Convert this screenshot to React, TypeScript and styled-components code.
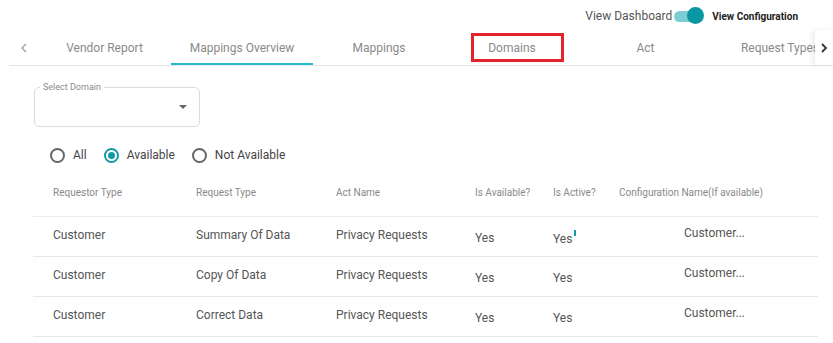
import React from 'react'
import styled, { createGlobalStyle, css } from 'styled-components'

const GlobalStyle = createGlobalStyle`
  html, body {
    margin: 0;
    padding: 0;
    background: #fff;
    font-family: Roboto, "Liberation Sans", Arial, sans-serif;
  }
  * { box-sizing: border-box; }
`

const Page = styled.div`
  width: 833px;
  height: 343px;
  overflow: hidden;
  background: #fff;
`

const TopBar = styled.div`
  height: 30px;
  display: flex;
  align-items: center;
  justify-content: flex-end;
  padding: 2px 35px 0 0;
`

const DashLabel = styled.span`
  font-size: 12px;
  color: #555;
`

const Toggle = styled.div`
  position: relative;
  width: 30px;
  height: 18px;
  margin-left: 2px;
  display: flex;
  align-items: center;
  &::before {
    content: '';
    width: 28px;
    height: 11px;
    border-radius: 6px;
    background: #7ccdd2;
  }
  &::after {
    content: '';
    position: absolute;
    right: 0;
    top: 0;
    width: 17px;
    height: 17px;
    border-radius: 50%;
    background: #0b97a2;
  }
`

const ConfigLabel = styled.span`
  margin-left: 8px;
  font-size: 10px;
  font-weight: 700;
  color: #222;
`

const TabBar = styled.div`
  display: flex;
  height: 36px;
  margin-left: 9px;
  border-bottom: 1px solid #e6e6e6;
`

const ScrollButton = styled.div<{ side: 'left' | 'right' }>`
  flex: none;
  display: flex;
  align-items: center;
  justify-content: center;
  background: #fff;
  ${p => p.side === 'left' ? css`
    width: 29px;
  ` : css`
    width: 18px;
    box-shadow: -3px 0 5px rgba(0, 0, 0, 0.07);
    z-index: 1;
  `}
`

const TabScroller = styled.div`
  flex: 1;
  display: flex;
  overflow: hidden;
`

const Tab = styled.div<{ active?: boolean }>`
  position: relative;
  flex: none;
  display: flex;
  align-items: center;
  justify-content: center;
  font-size: 12px;
  color: #8a8a8a;
  white-space: nowrap;
  padding-top: 1px;
  ${p => p.active && css`
    &::after {
      content: '';
      position: absolute;
      left: 0;
      right: 0;
      bottom: 0;
      height: 2px;
      background: #26b8cc;
    }
  `}
`

const Marked = styled.span`
  position: relative;
  &::after {
    content: '';
    position: absolute;
    left: -17px;
    right: -28px;
    top: -8px;
    bottom: -7px;
    border: 3px solid #e4232c;
  }
`

const Content = styled.div`
  padding: 21px 0 0 34px;
`

const SelectBox = styled.div`
  position: relative;
  width: 166px;
  height: 40px;
  border: 1px solid #dcdcdc;
  border-radius: 5px;
  display: flex;
  align-items: center;
  justify-content: flex-end;
  padding-right: 12px;
`

const SelectLabel = styled.span`
  position: absolute;
  left: 5px;
  top: -6px;
  padding: 0 3px;
  background: #fff;
  font-size: 9px;
  line-height: 11px;
  color: #8a8a8a;
`

const Caret = styled.span`
  width: 0;
  height: 0;
  border-left: 4px solid transparent;
  border-right: 4px solid transparent;
  border-top: 4px solid #666;
`

const RadioGroup = styled.div`
  display: flex;
  align-items: center;
  height: 20px;
  margin: 18px 0 0 16px;
`

const RadioItem = styled.label`
  display: flex;
  align-items: center;
  margin-right: 17px;
  font-size: 12px;
  color: #444;
`

const RadioCircle = styled.span<{ checked?: boolean }>`
  width: 15px;
  height: 15px;
  border-radius: 50%;
  border: 2px solid ${p => (p.checked ? '#139aa6' : '#666')};
  margin-right: 8px;
  display: flex;
  align-items: center;
  justify-content: center;
  ${p => p.checked && css`
    &::after {
      content: '';
      width: 7px;
      height: 7px;
      border-radius: 50%;
      background: #139aa6;
    }
  `}
`

const Table = styled.div`
  margin: 4px 0 0 33px;
  width: 785px;
`

const cols = '143px 140px 139px 78px 66px 219px'

const HeaderRow = styled.div`
  display: grid;
  grid-template-columns: ${cols};
  height: 48px;
  align-items: center;
  border-bottom: 1px solid #ececec;
`

const HeaderCell = styled.div`
  padding-left: 20px;
  font-size: 10px;
  color: #8a8a8a;
  white-space: nowrap;
`

const Row = styled.div`
  display: grid;
  grid-template-columns: ${cols};
  height: 40px;
  align-items: center;
  border-bottom: 1px solid #e6e6e6;
`

const Cell = styled.div<{ shift?: number; indent?: number }>`
  padding-left: ${p => p.indent ?? 20}px;
  font-size: 12px;
  color: #555;
  white-space: nowrap;
  transform: translateY(${p => p.shift ?? -2}px);
`

const Cursor = styled.span`
  display: inline-block;
  width: 2px;
  height: 6px;
  margin-left: 2px;
  background: #139aa6;
  vertical-align: 7px;
`

const Chevron = ({ dir, color, width }: { dir: 'left' | 'right'; color: string; width: number }) => (
  <svg width="8" height="12" viewBox="0 0 8 12">
    <polyline
      points={dir === 'left' ? '6,2 2,6 6,10' : '2,2 6,6 2,10'}
      fill="none"
      stroke={color}
      strokeWidth={width}
    />
  </svg>
)

const tabs = [
  { label: 'Vendor Report', width: 133 },
  { label: 'Mappings Overview', width: 142, active: true },
  { label: 'Mappings', width: 132 },
  { label: 'Domains', width: 134, marked: true },
  { label: 'Act', width: 133 },
  { label: 'Request Types', width: 136 },
]

const rows = [
  { type: 'Summary Of Data', cursor: true },
  { type: 'Copy Of Data' },
  { type: 'Correct Data' },
]

export default function App() {
  return (
    <Page>
      <GlobalStyle />
      <TopBar>
        <DashLabel>View Dashboard</DashLabel>
        <Toggle />
        <ConfigLabel>View Configuration</ConfigLabel>
      </TopBar>

      <TabBar>
        <ScrollButton side="left">
          <Chevron dir="left" color="#a0a0a0" width={1.4} />
        </ScrollButton>
        <TabScroller>
          {tabs.map(t => (
            <Tab key={t.label} active={t.active} style={{ width: t.width }}>
              {t.marked ? <Marked>{t.label}</Marked> : t.label}
            </Tab>
          ))}
        </TabScroller>
        <ScrollButton side="right">
          <Chevron dir="right" color="#333" width={1.8} />
        </ScrollButton>
      </TabBar>

      <Content>
        <SelectBox>
          <SelectLabel>Select Domain</SelectLabel>
          <Caret />
        </SelectBox>

        <RadioGroup>
          <RadioItem><RadioCircle />All</RadioItem>
          <RadioItem><RadioCircle checked />Available</RadioItem>
          <RadioItem><RadioCircle />Not Available</RadioItem>
        </RadioGroup>
      </Content>

      <Table>
        <HeaderRow>
          <HeaderCell>Requestor Type</HeaderCell>
          <HeaderCell>Request Type</HeaderCell>
          <HeaderCell>Act Name</HeaderCell>
          <HeaderCell>Is Available?</HeaderCell>
          <HeaderCell>Is Active?</HeaderCell>
          <HeaderCell>Configuration Name(If available)</HeaderCell>
        </HeaderRow>
        {rows.map(r => (
          <Row key={r.type}>
            <Cell>Customer</Cell>
            <Cell>{r.type}</Cell>
            <Cell>Privacy Requests</Cell>
            <Cell shift={1}>Yes</Cell>
            <Cell shift={1}>Yes{r.cursor && <Cursor />}</Cell>
            <Cell indent={85} shift={-4}>Customer...</Cell>
          </Row>
        ))}
      </Table>
    </Page>
  )
}
